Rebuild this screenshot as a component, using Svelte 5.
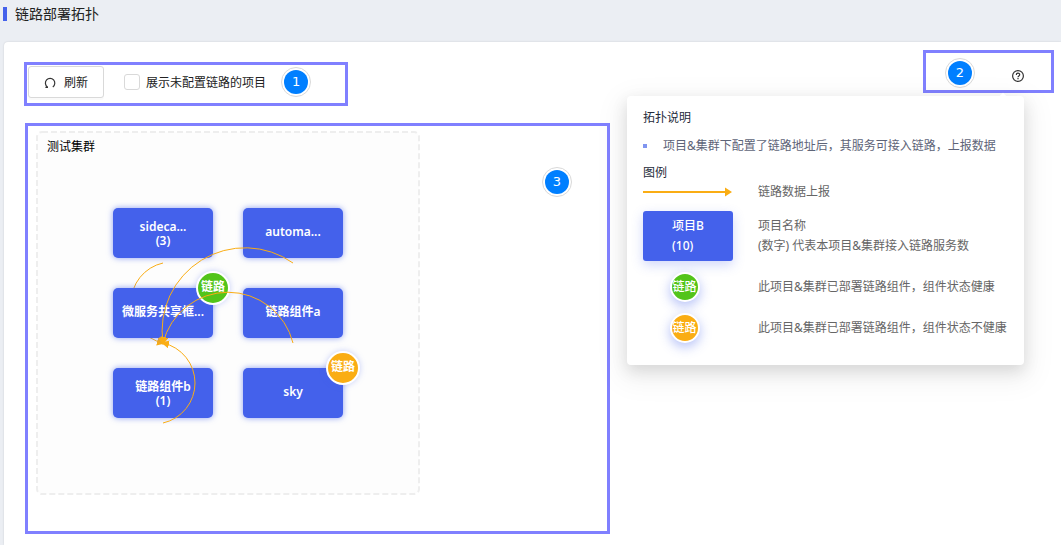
<script lang="ts">
  type Status = "healthy" | "unhealthy";

  interface TopoNode {
    name: string;
    count?: number;
    x: number;
    y: number;
    status?: Status;
  }

  const NODE_WIDTH = 100;
  const NODE_HEIGHT = 50;

  let showAll = $state(false);

  const nodes: TopoNode[] = [
    { name: "sideca...", count: 3, x: 85, y: 82 },
    { name: "automa...", x: 215, y: 82 },
    { name: "微服务共享框...", x: 85, y: 162, status: "healthy" },
    { name: "链路组件a", x: 215, y: 162 },
    { name: "链路组件b", count: 1, x: 85, y: 242 },
    { name: "sky", x: 215, y: 242, status: "unhealthy" },
  ];

  // edges leave and enter 5px under a node
  const backEdge = "M135 137 A41 41 0 0 0 135 217";
  const edges = [
    "M265 137 A83 83 0 0 0 135 217",
    "M265 217 A67 67 0 0 0 135 217",
    "M135 297 A41 41 0 0 0 135 217",
  ];
</script>

<header class="page-header">
  <h1>链路部署拓扑</h1>
</header>

<main class="panel">
  <div class="toolbar">
    <div class="outline actions">
      <button class="refresh" type="button">
        <svg width="12" height="12" viewBox="0 0 12 12" aria-hidden="true">
          <path d="M1.4 10.3 H3.4 V9.9 A4.7 4.7 0 1 1 8.8 9.9" />
        </svg>
        刷新
      </button>
      <label class="toggle">
        <input type="checkbox" bind:checked={showAll} />
        <span>展示未配置链路的项目</span>
      </label>
      <span class="step">1</span>
    </div>

    <div class="outline help">
      <span class="step">2</span>
      <button class="help-button" type="button" aria-label="拓扑说明">
        <svg width="12" height="12" viewBox="0 0 12 12" aria-hidden="true">
          <circle cx="6" cy="6" r="5.4" />
          <path d="M4.3 4.9 C4.3 2.6 7.7 2.6 7.7 4.7 C7.7 5.9 6 5.9 6 7.2 M6 8.1 V9.2" />
        </svg>
      </button>

      <section class="popover">
        <h2>拓扑说明</h2>
        <ul>
          <li>项目&amp;集群下配置了链路地址后，其服务可接入链路，上报数据</li>
        </ul>
        <h2>图例</h2>
        <div class="legend">
          <svg class="legend-arrow" width="90" height="10" viewBox="0 0 90 10" aria-hidden="true">
            <path d="M0 4 H82 V0.5 L89 5 L82 9.5 V6 H0 Z" />
          </svg>
          <span>链路数据上报</span>

          <div class="legend-node"><span>项目B<br />(10)</span></div>
          <p>项目名称<br />(数字) 代表本项目&amp;集群接入链路服务数</p>

          <span class="badge healthy">链路</span>
          <span>此项目&amp;集群已部署链路组件，组件状态健康</span>

          <span class="badge unhealthy">链路</span>
          <span>此项目&amp;集群已部署链路组件，组件状态不健康</span>
        </div>
      </section>
    </div>
  </div>

  <div class="outline canvas">
    <span class="step">3</span>
    <svg class="topology" width="400" height="405" viewBox="0 0 400 405">
      <defs>
        <marker id="arrow" viewBox="0 0 8 8" refX="6" refY="4" markerWidth="8" markerHeight="8" markerUnits="userSpaceOnUse" orient="auto">
          <path d="M0 0 L8 4 L0 8 Z" fill="#faad14" />
        </marker>
      </defs>

      <rect class="cluster" x="9" y="6" width="382" height="362" rx="5" />
      <text class="cluster-name" x="19" y="25">测试集群</text>

      <path class="edge" d={backEdge} marker-end="url(#arrow)" />

      {#each nodes as node}
        <g transform="translate({node.x} {node.y})">
          <rect class="node" width={NODE_WIDTH} height={NODE_HEIGHT} rx="5" />
          {#if node.count}
            <text class="label" x={NODE_WIDTH / 2} y="23">{node.name}</text>
            <text class="label" x={NODE_WIDTH / 2} y="37">({node.count})</text>
          {:else}
            <text class="label" x={NODE_WIDTH / 2} y="28">{node.name}</text>
          {/if}
          {#if node.status}
            <circle class="mark {node.status}" cx={NODE_WIDTH} cy="0" r="16" />
            <text class="label" x={NODE_WIDTH} y="3">链路</text>
          {/if}
        </g>
      {/each}

      {#each edges as d}
        <path class="edge" {d} marker-end="url(#arrow)" />
      {/each}
    </svg>
  </div>
</main>

<style>
  :global(body) {
    background: #ebeef3;
    color: #222;
    font: 12px/20px "Noto Sans", "Noto Sans CJK SC", sans-serif;
  }
  h1,
  h2,
  ul,
  p {
    margin: 0;
    padding: 0;
  }
  .page-header {
    display: flex;
    align-items: center;
    height: 28px;
    padding: 0 3px 13px;
  }
  h1 {
    padding-left: 8px;
    border-left: 4px solid #4461eb;
    font-size: 14px;
    font-weight: 400;
    line-height: 14px;
  }
  .panel {
    box-sizing: border-box;
    min-height: calc(100vh - 42px);
    margin: 1px 0 0 4px;
    padding: 8px 7px 11px 20px;
    border-radius: 4px 0 0 0;
    background: #fff;
    box-shadow: 0 0 2px rgba(0, 0, 0, 0.15);
  }
  .outline {
    box-sizing: border-box;
    border: 3px solid #8080ff;
  }
  .toolbar {
    display: flex;
    justify-content: space-between;
    align-items: flex-start;
  }
  .actions {
    display: flex;
    align-items: flex-start;
    width: 324px;
    height: 44px;
    margin-top: 12px;
    padding: 1px;
  }
  .refresh {
    display: flex;
    justify-content: center;
    align-items: center;
    gap: 8px;
    width: 76px;
    height: 32px;
    margin-right: 20px;
    padding: 1px 0 0;
    border: 1px solid #d9d9d9;
    border-radius: 3px;
    background: #fff;
    box-shadow: 0 2px 0 rgba(0, 0, 0, 0.02);
    color: inherit;
    font: inherit;
  }
  .refresh svg,
  .help-button svg {
    fill: none;
    stroke: #333;
    stroke-width: 1.2;
  }
  .toggle {
    display: flex;
    align-items: center;
    gap: 6px;
    height: 32px;
    margin-right: 15px;
  }
  .toggle span {
    padding-top: 2px;
  }
  .toggle input {
    appearance: none;
    width: 16px;
    height: 16px;
    margin: 0;
    border: 1px solid #d9d9d9;
    border-radius: 3px;
    background: #fff;
  }
  .toggle input:checked {
    border-color: #4461eb;
    background: #4461eb;
  }
  .step {
    box-sizing: border-box;
    flex: none;
    width: 30px;
    height: 30px;
    padding: 2px;
    border: 1px solid #d9d9d9;
    border-radius: 50%;
    background: #007fff;
    background-clip: content-box;
    color: #fff;
    font: 13px/24px "DejaVu Sans", sans-serif;
    text-align: center;
  }
  .actions .step {
    margin-top: 1px;
  }
  .help {
    position: relative;
    display: flex;
    align-items: center;
    gap: 37px;
    width: 131px;
    height: 43px;
    padding: 3px 19px 0;
  }
  .help-button {
    display: flex;
    padding: 5px 0 0;
    border: 0;
    background: none;
  }
  .popover {
    position: absolute;
    top: 100%;
    right: 27px;
    z-index: 1;
    box-sizing: border-box;
    width: 397px;
    margin-top: 6px;
    padding: 12px 16px 22px;
    border-radius: 4px;
    background: #fff;
    box-shadow:
      0 6px 16px rgba(0, 0, 0, 0.12),
      0 9px 28px 8px rgba(0, 0, 0, 0.05);
    color: #666;
    white-space: nowrap;
  }
  .popover::before {
    content: "";
    position: absolute;
    top: -2px;
    right: 18px;
    width: 6px;
    height: 6px;
    background: #fff;
    transform: rotate(45deg);
  }
  h2 {
    color: #252b3a;
    font-size: 12px;
    font-weight: 400;
  }
  ul {
    margin: 8px 0 7px;
    list-style: none;
  }
  li {
    display: flex;
    align-items: center;
    gap: 16px;
    color: #5e6478;
  }
  li::before {
    content: "";
    width: 4px;
    height: 4px;
    background: #8095f0;
  }
  .legend {
    display: grid;
    grid-template-columns: 90px 1fr;
    grid-template-rows: 17px 50px 30px 30px;
    gap: 11px 25px;
    align-items: center;
  }
  .legend-arrow {
    fill: #faad14;
  }
  .legend-node {
    display: grid;
    place-content: center;
    height: 50px;
    border-radius: 3px;
    background: #4461eb;
    box-shadow: 0 4px 12px rgba(68, 97, 235, 0.25);
    color: #fff;
    font-weight: 500;
  }
  .badge {
    box-sizing: border-box;
    justify-self: center;
    width: 30px;
    height: 30px;
    margin-right: 6px;
    border: 2px solid #fff;
    border-radius: 50%;
    box-shadow: 0 4px 12px rgba(68, 97, 235, 0.4);
    color: #fff;
    font-weight: 500;
    line-height: 26px;
    text-align: center;
    text-indent: -1px;
  }
  .badge.healthy {
    background: #52c41a;
  }
  .badge.unhealthy {
    background: #faad14;
  }
  .canvas {
    display: flex;
    flex-direction: row-reverse;
    justify-content: space-between;
    width: 585px;
    margin: 17px 0 0 1px;
  }
  .canvas .step {
    margin: 41px 35px 0 0;
  }
  .topology {
    display: block;
  }
  .cluster {
    fill: #fdfdfd;
    stroke: #eee;
    stroke-width: 2;
    stroke-dasharray: 6 3;
  }
  .cluster-name {
    fill: #000;
  }
  .node {
    fill: #4461eb;
    filter: drop-shadow(0 0 3px rgba(68, 97, 235, 0.6));
  }
  .label {
    fill: #fff;
    font-weight: 600;
    text-anchor: middle;
  }
  .mark {
    stroke: #fff;
    stroke-width: 2;
    filter: drop-shadow(0 0 3px rgba(68, 97, 235, 0.3));
  }
  .mark.healthy {
    fill: #52c41a;
  }
  .mark.unhealthy {
    fill: #faad14;
  }
  .edge {
    fill: none;
    stroke: #faad14;
    stroke-width: 1;
  }
</style>
